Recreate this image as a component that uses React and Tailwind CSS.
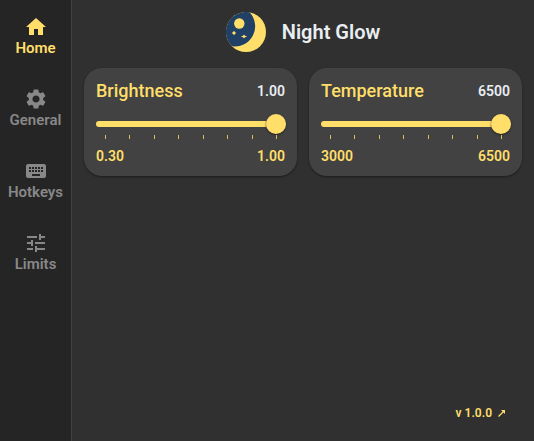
import { useState } from "react";
import { MdHome, MdSettings, MdKeyboard, MdTune } from "react-icons/md";

const NAV = [
  { label: "Home", Icon: MdHome },
  { label: "General", Icon: MdSettings },
  { label: "Hotkeys", Icon: MdKeyboard },
  { label: "Limits", Icon: MdTune },
];

function Sidebar() {
  const [active, setActive] = useState("Home");
  return (
    <nav className="flex w-18 shrink-0 flex-col border-r border-[#414141] bg-[#252525]">
      {NAV.map(({ label, Icon }) => (
        <button
          key={label}
          type="button"
          onClick={() => setActive(label)}
          className={
            "flex h-18 flex-col items-center justify-center text-[15px] leading-[18px] font-semibold " +
            (active === label ? "text-[#ffde6a]" : "text-[#888888]")
          }
        >
          <Icon className="size-6" aria-hidden="true" />
          {label}
        </button>
      ))}
    </nav>
  );
}

function Logo() {
  return (
    <svg viewBox="0 0 40 40" className="size-10" aria-hidden="true">
      <circle cx="20" cy="20" r="20" fill="#ffde6a" />
      <path d="M23.5 0.3A20 20 0 0 0 6 34.3A20.2 20.2 0 0 0 23.5 0.3Z" fill="#214066" />
      <circle cx="13.3" cy="11.5" r="5.2" fill="#ffde6a" />
      <path d="M8 18.8l.9 1.300 1.300.9-1.300.9-.9 1.300-.9-1.300-1.300-.9 1.300-.9z" fill="#ffde6a" />
      <path d="M18 22.500l1 1.300 2.200.7-2.200.7-1 1.300-1-1.300-2.200-.7 2.200-.7z" fill="#ffde6a" />
    </svg>
  );
}

const TICKS = [0, 1, 2, 3, 4, 5, 6, 7];

function SliderCard({ id, title, min, max, step, digits }) {
  const [value, setValue] = useState(max);
  return (
    <section className="min-w-0 rounded-[18px] bg-[#424242] p-3 text-sm font-semibold text-[#ffde6a] shadow-[0_1px_2px_#1c1c1c]">
      <div className="flex items-center justify-between">
        <label htmlFor={id} className="text-lg leading-[22px] font-medium">
          {title}
        </label>
        <output htmlFor={id} className="text-[#e8eef2]">
          {value.toFixed(digits)}
        </output>
      </div>
      <div className="-mr-px pt-3">
        <input
          id={id}
          type="range"
          min={min}
          max={max}
          step={step}
          value={value}
          onChange={(e) => setValue(Number(e.target.value))}
          className="block h-5 w-full cursor-pointer appearance-none bg-transparent [&::-webkit-slider-runnable-track]:h-1.5 [&::-webkit-slider-runnable-track]:rounded-full [&::-webkit-slider-runnable-track]:bg-[#ffde6a] [&::-webkit-slider-thumb]:-mt-[7px] [&::-webkit-slider-thumb]:size-5 [&::-webkit-slider-thumb]:appearance-none [&::-webkit-slider-thumb]:rounded-full [&::-webkit-slider-thumb]:bg-[#ffde6a] [&::-webkit-slider-thumb]:shadow-[0_1px_2px_#222222]"
        />
        <div className="flex h-1.5 justify-between px-[9px] pt-px" aria-hidden="true">
          {TICKS.map((t) => (
            <span key={t} className="h-1 w-px bg-[#d9bf62]" />
          ))}
        </div>
      </div>
      <div className="flex justify-between pt-2 leading-4">
        <span>{min.toFixed(digits)}</span>
        <span>{max.toFixed(digits)}</span>
      </div>
    </section>
  );
}

export default function App() {
  return (
    <div className="flex min-h-screen bg-[#303030] font-[Roboto,sans-serif]">
      <Sidebar />
      <main className="flex min-w-0 grow flex-col px-3">
        <header className="flex items-center justify-center gap-4 py-3 pb-4">
          <Logo />
          <h1 className="text-xl leading-10 font-semibold text-[#e8eef2]">Night Glow</h1>
        </header>
        <div className="grid grid-cols-2 gap-3">
          <SliderCard id="brightness" title="Brightness" min={0.3} max={1} step={0.01} digits={2} />
          <SliderCard id="temperature" title="Temperature" min={3000} max={6500} step={100} digits={0} />
        </div>
        <footer className="mt-auto flex justify-end px-4 pb-5">
          <a href="#releases" className="flex items-center gap-1.5 text-xs font-semibold text-[#ffde6a]">
            v 1.0.0
            <svg viewBox="0 0 8 8" className="size-2" aria-hidden="true">
              <path d="M0.500 7.500L5.500 2.500" stroke="currentColor" strokeWidth="1.2" />
              <path d="M3 1H7V5z" fill="currentColor" />
            </svg>
          </a>
        </footer>
      </main>
    </div>
  );
}
